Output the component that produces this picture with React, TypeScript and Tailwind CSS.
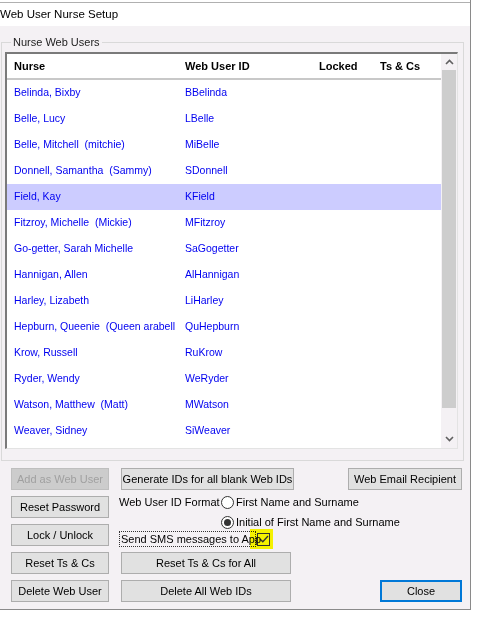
import React from "react";

const nurses: [string, string][] = [
  ["Belinda, Bixby", "BBelinda"],
  ["Belle, Lucy", "LBelle"],
  ["Belle, Mitchell  (mitchie)", "MiBelle"],
  ["Donnell, Samantha  (Sammy)", "SDonnell"],
  ["Field, Kay", "KField"],
  ["Fitzroy, Michelle  (Mickie)", "MFitzroy"],
  ["Go-getter, Sarah Michelle", "SaGogetter"],
  ["Hannigan, Allen", "AlHannigan"],
  ["Harley, Lizabeth", "LiHarley"],
  ["Hepburn, Queenie  (Queen arabell", "QuHepburn"],
  ["Krow, Russell", "RuKrow"],
  ["Ryder, Wendy", "WeRyder"],
  ["Watson, Matthew  (Matt)", "MWatson"],
  ["Weaver, Sidney", "SiWeaver"],
];

function Btn({ label, w, disabled, primary }: { label: string; w: string; disabled?: boolean; primary?: boolean }) {
  const base = "h-[22px] flex items-center justify-center text-[11px] leading-none whitespace-nowrap shrink-0";
  if (disabled) return <div className={`${base} ${w} bg-[#cccccc] border border-[#bfbfbf] text-[#a0a0a0]`}>{label}</div>;
  if (primary) return <div className={`${base} ${w} bg-[#e1e1e1] border-2 border-[#0078d7] text-black`}>{label}</div>;
  return <div className={`${base} ${w} bg-[#e1e1e1] border border-[#adadad] text-black`}>{label}</div>;
}

function Radio({ checked }: { checked?: boolean }) {
  return (
    <span className="w-[13px] h-[13px] rounded-full border border-[#333] bg-white flex items-center justify-center shrink-0">
      {checked && <span className="w-[7px] h-[7px] rounded-full bg-[#333]" />}
    </span>
  );
}

export default function App() {
  return (
    <div className="w-[478px] h-[619px] bg-white overflow-hidden text-black" style={{ fontFamily: '"Liberation Sans", Arial, sans-serif' }}>
      <div className="w-[471px] border-r border-b border-[#8a8a8a]">
        {/* strip of the window behind */}
        <div className="h-[3px] border-b border-[#b0b0b0]" />
        <div className="h-[23px] bg-white flex items-center text-[11.5px]">Web User Nurse Setup</div>

        <div className="h-[583px] bg-[#f4f1f4] pt-[10px]">
          <fieldset className="ml-[1px] w-[463px] h-[425px] border border-[#d9d9d9] px-[3px] pb-0">
            <legend className="ml-[6px] px-[2px] text-[11px] leading-[12px] text-[#222]">Nurse Web Users</legend>

            <div className="mt-[4px] w-[453px] h-[397px] border-t-2 border-l-2 border-[#7a7a7a] border-r border-b border-r-[#e3e3e3] border-b-[#e3e3e3] bg-white flex">
              <div className="flex-1 flex flex-col">
                <div className="h-[24px] flex items-center text-[11px] font-bold shrink-0">
                  <span className="w-[178px] pl-[7px]">Nurse</span>
                  <span className="w-[134px]">Web User ID</span>
                  <span className="w-[61px]">Locked</span>
                  <span>Ts &amp; Cs</span>
                </div>
                <div className="h-[2px] bg-[#c8c8c8] shrink-0" />
                {nurses.map(([n, id], i) => (
                  <div key={id} className={`h-[26px] flex items-center text-[10.5px] text-[#0000f0] ${i === 4 ? "bg-[#ccccff]" : ""}`}>
                    <span className="w-[178px] pl-[7px] shrink-0 whitespace-pre">{n}</span>
                    <span>{id}</span>
                  </div>
                ))}
              </div>
              <div className="w-[16px] bg-[#f4f1f4] flex flex-col items-center">
                <div className="h-[16px] flex items-center justify-center">
                  <svg width="9" height="6" viewBox="0 0 9 6"><path d="M1 5 L4.5 1.5 L8 5" fill="none" stroke="#606060" strokeWidth="1.6" /></svg>
                </div>
                <div className="w-[14px] h-[338px] bg-[#cdcdcd]" />
                <div className="flex-1" />
                <div className="h-[18px] flex items-center justify-center">
                  <svg width="9" height="6" viewBox="0 0 9 6"><path d="M1 1 L4.5 4.5 L8 1" fill="none" stroke="#606060" strokeWidth="1.6" /></svg>
                </div>
              </div>
            </div>
          </fieldset>

          <div className="flex mt-[7px] pl-[11px]">
            <div className="flex flex-col gap-[6px]">
              <Btn label="Add as Web User" w="w-[98px]" disabled />
              <Btn label="Reset Password" w="w-[98px]" />
              <Btn label="Lock / Unlock" w="w-[98px]" />
              <Btn label="Reset Ts & Cs" w="w-[98px]" />
              <Btn label="Delete Web User" w="w-[98px]" />
            </div>

            <div className="ml-[12px] w-[173px] shrink-0 flex flex-col text-[11px]">
              <Btn label="Generate IDs for all blank Web IDs" w="w-[173px]" />
              <div className="h-[62px] flex flex-col pt-[6px]">
                <div className="h-[13px] flex items-center -ml-[2px]">
                  <span className="w-[102px] shrink-0 leading-none whitespace-nowrap">Web User ID Format</span>
                  <Radio />
                  <span className="ml-[2px] shrink-0 leading-none whitespace-nowrap">First Name and Surname</span>
                </div>
                <div className="h-[13px] mt-[7px] flex items-center pl-[100px]">
                  <Radio checked />
                  <span className="ml-[2px] shrink-0 leading-none whitespace-nowrap">Initial of First Name and Surname</span>
                </div>
                <div className="h-[16px] mt-[2px] flex items-center -ml-[2px]">
                  <span className="h-[16px] w-[137px] shrink-0 border border-dotted border-[#333] flex items-center pl-[1px] leading-none whitespace-nowrap">Send SMS messages to App</span>
                  <span className="-ml-[6px] h-[20px] w-[23px] shrink-0 bg-[#ffff00] mix-blend-multiply flex items-center justify-center">
                    <span className="w-[13px] h-[13px] border border-[#333] flex items-center justify-center ml-[4px]">
                      <svg width="10" height="8" viewBox="0 0 10 8"><path d="M1 4 L3.8 6.8 L9 1" fill="none" stroke="#333" strokeWidth="1.3" /></svg>
                    </span>
                  </span>
                </div>
              </div>
              <Btn label="Reset Ts & Cs for All" w="w-[170px]" />
              <div className="h-[6px]" />
              <Btn label="Delete All Web IDs" w="w-[170px]" />
            </div>

            <div className="ml-auto mr-[8px] flex flex-col items-end justify-between">
              <Btn label="Web Email Recipient" w="w-[114px]" />
              <Btn label="Close" w="w-[82px]" primary />
            </div>
          </div>
        </div>
      </div>
    </div>
  );
}
